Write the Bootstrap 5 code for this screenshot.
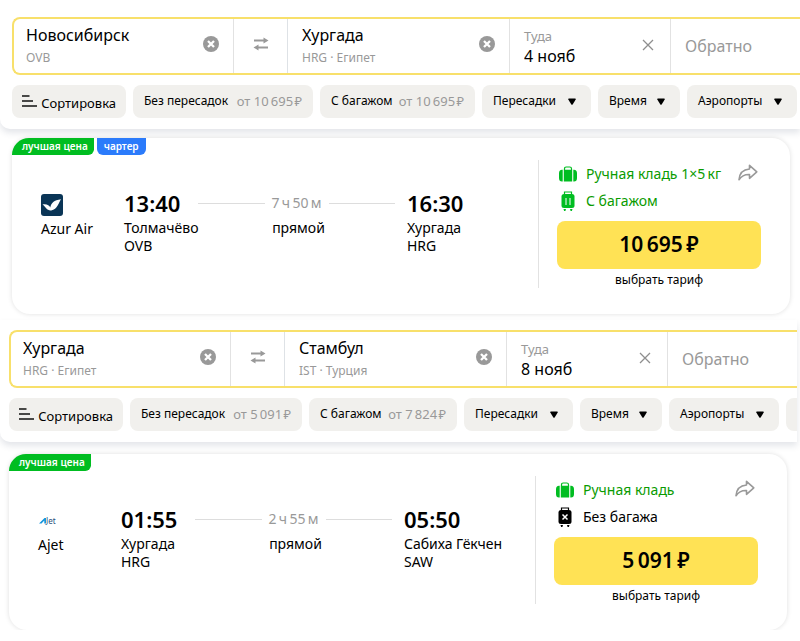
<!DOCTYPE html>
<html lang="ru">
<head>
<meta charset="utf-8">
<meta name="viewport" content="width=device-width, initial-scale=1">
<title>Авиабилеты</title>
<link rel="stylesheet" href="https://cdn.jsdelivr.net/npm/bootstrap@5.3.0/dist/css/bootstrap.min.css">
<style>
body{font-family:"Noto Sans","Open Sans",sans-serif;font-size:14px;line-height:18px;color:#000;background:#fff;overflow-x:hidden}
button{color:inherit}
.results{--edge:12px}
.results-next{--edge:9px;margin-right:3px;margin-top:6px}
.search-panel{padding:17px 0 11px var(--edge);border-bottom-left-radius:10px;box-shadow:0 4px 6px rgba(50,60,90,.13);overflow:hidden;background:#fff}
.results-next .search-panel{padding-top:10px}
.search-line{height:58px;border:2px solid #f8e06b;border-right:0;border-radius:8px 0 0 8px}
.cell{border-right:1px solid #e2e2e2;min-width:0}
.plain{border:0;background:none;padding:0;display:flex;flex:none}
.city{flex:1 1 0;padding:5px 14px 0 12px}
.swap{width:54px;padding-bottom:4px}
.city-from{flex-basis:0;padding-right:14px}
.city-to{padding-left:14px}
.when{width:161px;padding:8px 14px 0 14px}
.back{width:129px;padding-left:14px}
.field{border:0;padding:0;background:none;width:100%;color:#000;outline-offset:2px;font-size:16px;line-height:22px;height:22px;display:block}
.field::placeholder{color:#999;opacity:1}
.note{font-size:13px;line-height:18px;color:#999}
.city .note{font-size:12px;margin-top:3px}
.wipe{align-self:flex-start;margin-top:12px}
.chips{gap:7px;margin-top:10px}
.chip{height:33px;flex:none;border:0;border-radius:8px;background:#f1f0ed;font-size:12px;padding:0 11px 1px;white-space:nowrap;display:flex;align-items:center;justify-content:space-between}
.chip-sort{width:114px;padding:2px 10px 0 10px;font-size:13px}
.chip-direct{width:180px}.chip-bag{width:155px}
.results-next .chip-direct{width:172px}.results-next .chip-bag{width:148px}
.chip-stops{width:109px}.chip-time{width:82px}.chip-port{width:110px}
.chip span{color:#999;font-size:13px}
.ticket{margin:9px 10px 0 var(--edge);border-radius:18px;background:#fff;box-shadow:0 0 5px rgba(0,0,0,.13)}
.results-next .ticket{margin-top:12px}
.tag-line{gap:3px;height:17px}
.tag{font-size:10px;line-height:17px;font-weight:600;color:#fff;background:#00bd21;padding:0 6px 0 10px;border-radius:18px 0 6px 0}
.tag-blue{background:#2b7bfb;border-radius:0 0 6px 6px;padding:0 7px}
.route{padding:35px 0 0 29px}
.carrier{width:83px;flex:none}
.carrier svg{display:block;margin:4px 0}
.stop-from{width:74px;flex:none}
.stop-to{width:131px;flex:none;white-space:nowrap}
.clock{font-size:22px;line-height:26px;font-weight:600;margin-bottom:3px}
.leg{height:26px;gap:7px;color:#999;margin:0 12px 3px 0}
.leg i{height:1px;background:#ddd;flex:1}
.offer{width:252px;flex:none;border-left:1px solid #e2e2e2;margin:5px 0 26px;padding:0 29px 0 18px;height:128px}
.bag{height:27px;gap:7px}
.green{color:#0a9b00}
.share{margin-left:auto;margin-right:3px;padding-bottom:3px}
.price{width:100%;height:48px;border:0;border-radius:8px;background:#ffe255;font-size:21px;font-weight:600;margin-top:7px;padding-bottom:3px;display:block}
.hint{font-size:12px;line-height:22px;text-align:center}
</style>
<script src="https://cdn.jsdelivr.net/npm/bootstrap@5.3.0/dist/js/bootstrap.bundle.min.js"></script>
</head>
<body>
<svg class="d-none" aria-hidden="true">
<symbol id="clear" viewBox="0 0 16 16"><circle cx="8" cy="8" r="8" fill="#999"/><path d="M5 5l6 6M11 5l-6 6" stroke="#fff" stroke-width="2.300"/></symbol>
<symbol id="swap" viewBox="0 0 16 14"><path d="M1 3.500h11M4 10.500h11" stroke="#999" stroke-width="1.800" fill="none"/><path d="M10.500.500L15.500 3.500l-5 3zM5.500 7.500L.5 10.500l5 3z" fill="#999"/></symbol>
<symbol id="cross" viewBox="0 0 12 12"><path d="M1 1l10 10M11 1L1 11" stroke="#8e8e8e" stroke-width="1.300"/></symbol>
<symbol id="sort" viewBox="0 0 15 12"><path d="M0 1h7.500M0 6h11M0 11h15" stroke="#111" stroke-width="1.600"/></symbol>
<symbol id="down" viewBox="0 0 8 7"><path d="M.8.500h6.400q1 0 .5 1L4.800 6.300q-.8 1-1.600 0L.3 1.500q-.5-1 .5-1z" fill="#000"/></symbol>
<symbol id="hand" viewBox="0 0 18 16"><path d="M5.500 4V2.800Q5.500 1 7.200 1h3.600q1.700 0 1.700 1.800V4" fill="none" stroke="#00bd21" stroke-width="1.200"/><path d="M4.800 3.800h8.400V15.500H4.800zM3.700 3.800v11.700H3Q0 15.500 0 12V7.300Q0 3.800 3 3.800zM14.300 3.800v11.700h.7q3 0 3-3.500V7.300q0-3.500-3-3.500z" fill="#00bd21"/></symbol>
<symbol id="case" viewBox="0 0 14 20"><path d="M3.500 3V1h7v2" fill="none" stroke="currentColor" stroke-width="1.200"/><rect x="0.500" y="3" width="13" height="14" rx="2.500" fill="currentColor"/><path d="M2.500 18h2.500l-.6 2H3.100zM9 18h2.500l-.6 2H9.600z" fill="currentColor"/></symbol>
<symbol id="share" viewBox="0 0 20 17"><path d="M11.500 1.300L18.800 7.800l-7.300 6.500v-3.800C7 10.300 3.500 11.800 1 15.700 1.500 9.500 5 5.500 11.500 5z" fill="none" stroke="#999" stroke-width="1.600" stroke-linejoin="round"/></symbol>
</svg>

<main>
<section class="results">
  <form class="search-panel">
    <div class="search-line d-flex">
      <div class="cell city city-from d-flex">
        <div class="flex-grow-1"><input class="field" type="text" aria-label="Откуда" value="Новосибирск"><div class="note">OVB</div></div>
        <button class="plain wipe" type="button" aria-label="Очистить"><svg width="16" height="16"><use href="#clear"/></svg></button>
      </div>
      <button class="plain cell swap border-end rounded-0 align-items-center justify-content-center" type="button" aria-label="Поменять местами"><svg width="16" height="14"><use href="#swap"/></svg></button>
      <div class="cell city city-to d-flex">
        <div class="flex-grow-1"><input class="field" type="text" aria-label="Куда" value="Хургада"><div class="note">HRG · Египет</div></div>
        <button class="plain wipe" type="button" aria-label="Очистить"><svg width="16" height="16"><use href="#clear"/></svg></button>
      </div>
      <div class="cell when d-flex">
        <div class="flex-grow-1"><label class="note d-block" for="date-a">Туда</label><input class="field" id="date-a" type="text" value="4 нояб"></div>
        <button class="plain wipe" type="button" aria-label="Очистить дату"><svg width="16" height="12"><use href="#cross"/></svg></button>
      </div>
      <div class="back d-flex align-items-center"><input class="field" type="text" aria-label="Обратно" placeholder="Обратно"></div>
    </div>
    <div class="chips d-flex">
      <button class="chip chip-sort" type="button"><svg class="mb-1" width="15" height="12"><use href="#sort"/></svg>Сортировка</button>
      <button class="chip chip-direct" type="button">Без пересадок <span>от 10&#8201;695&#8202;₽</span></button>
      <button class="chip chip-bag" type="button">С багажом <span>от 10&#8201;695&#8202;₽</span></button>
      <button class="chip chip-stops" type="button">Пересадки <svg class="me-1" width="8" height="7"><use href="#down"/></svg></button>
      <button class="chip chip-time" type="button">Время <svg class="me-1" width="8" height="7"><use href="#down"/></svg></button>
      <button class="chip chip-port" type="button">Аэропорты <svg class="me-1" width="8" height="7"><use href="#down"/></svg></button>
    </div>
  </form>
  <article class="ticket">
    <div class="tag-line d-flex"><span class="tag">лучшая цена</span><span class="tag tag-blue">чартер</span></div>
    <div class="d-flex">
      <div class="route d-flex flex-grow-1">
        <div class="carrier"><svg width="22" height="22" viewBox="0 0 22 22" role="img" aria-label="Azur Air"><rect width="22" height="22" rx="3" fill="#0a3556"/><path d="M1.500 10.500C5 9.500 8.500 11 9.300 13.500 10 9.500 13 6 20 5.300 18 8 16.500 15.500 10.200 16.500 6 17 4.500 12.500 1.500 10.500z" fill="#fff"/></svg>Azur Air</div>
        <div class="stop-from"><div class="clock">13:40</div>Толмачёво<br>OVB</div>
        <div class="flex-grow-1"><div class="leg d-flex align-items-center"><i></i><span>7&#8201;ч&#8201;50&#8201;м</span><i></i></div><div class="text-center pe-2">прямой</div></div>
        <div class="stop-to"><div class="clock">16:30</div>Хургада<br>HRG</div>
      </div>
      <div class="offer">
        <div class="bag green d-flex align-items-center"><svg class="flex-shrink-0" width="22" height="16"><use href="#hand"/></svg><span>Ручная кладь 1×5&#8201;кг</span><button class="plain share" type="button" aria-label="Поделиться"><svg width="20" height="17"><use href="#share"/></svg></button></div>
        <div class="bag green d-flex align-items-center"><svg width="22" height="20" color="#00bd21"><use href="#case"/><path d="M9 7v7M13 7v7" stroke="#fff"/></svg>С багажом</div>
        <button class="price" type="button">10&#8201;695&#8201;₽</button>
        <div class="hint">выбрать тариф</div>
      </div>
    </div>
  </article>
</section>

<section class="results results-next">
  <form class="search-panel">
    <div class="search-line d-flex">
      <div class="cell city city-from d-flex">
        <div class="flex-grow-1"><input class="field" type="text" aria-label="Откуда" value="Хургада"><div class="note">HRG · Египет</div></div>
        <button class="plain wipe" type="button" aria-label="Очистить"><svg width="16" height="16"><use href="#clear"/></svg></button>
      </div>
      <button class="plain cell swap border-end rounded-0 align-items-center justify-content-center" type="button" aria-label="Поменять местами"><svg width="16" height="14"><use href="#swap"/></svg></button>
      <div class="cell city city-to d-flex">
        <div class="flex-grow-1"><input class="field" type="text" aria-label="Куда" value="Стамбул"><div class="note">IST · Турция</div></div>
        <button class="plain wipe" type="button" aria-label="Очистить"><svg width="16" height="16"><use href="#clear"/></svg></button>
      </div>
      <div class="cell when d-flex">
        <div class="flex-grow-1"><label class="note d-block" for="date-b">Туда</label><input class="field" id="date-b" type="text" value="8 нояб"></div>
        <button class="plain wipe" type="button" aria-label="Очистить дату"><svg width="16" height="12"><use href="#cross"/></svg></button>
      </div>
      <div class="back d-flex align-items-center"><input class="field" type="text" aria-label="Обратно" placeholder="Обратно"></div>
    </div>
    <div class="chips d-flex">
      <button class="chip chip-sort" type="button"><svg class="mb-1" width="15" height="12"><use href="#sort"/></svg>Сортировка</button>
      <button class="chip chip-direct" type="button">Без пересадок <span>от 5&#8201;091&#8202;₽</span></button>
      <button class="chip chip-bag" type="button">С багажом <span>от 7&#8201;824&#8202;₽</span></button>
      <button class="chip chip-stops" type="button">Пересадки <svg class="me-1" width="8" height="7"><use href="#down"/></svg></button>
      <button class="chip chip-time" type="button">Время <svg class="me-1" width="8" height="7"><use href="#down"/></svg></button>
      <button class="chip chip-port" type="button">Аэропорты <svg class="me-1" width="8" height="7"><use href="#down"/></svg></button>
      <button class="chip" type="button" aria-label="Ещё фильтры"></button>
    </div>
  </form>
  <article class="ticket">
    <div class="tag-line d-flex"><span class="tag">лучшая цена</span></div>
    <div class="d-flex">
      <div class="route d-flex flex-grow-1">
        <div class="carrier"><svg width="22" height="22" viewBox="0 0 22 22" role="img" aria-label="Ajet"><path d="M1 13.500L6.500 8H8v5.500H6.300v-3L3.500 13.500z" fill="#1595dc"/><text x="8" y="14" font-size="8" fill="#28507c">Jet</text></svg>Ajet</div>
        <div class="stop-from"><div class="clock">01:55</div>Хургада<br>HRG</div>
        <div class="flex-grow-1"><div class="leg d-flex align-items-center"><i></i><span>2&#8201;ч&#8201;55&#8201;м</span><i></i></div><div class="text-center pe-2">прямой</div></div>
        <div class="stop-to"><div class="clock">05:50</div>Сабиха Гёкчен<br>SAW</div>
      </div>
      <div class="offer">
        <div class="bag green d-flex align-items-center"><svg class="flex-shrink-0" width="22" height="16"><use href="#hand"/></svg><span>Ручная кладь</span><button class="plain share" type="button" aria-label="Поделиться"><svg width="20" height="17"><use href="#share"/></svg></button></div>
        <div class="bag d-flex align-items-center"><svg width="22" height="20"><use href="#case"/><path d="M8.500 7.500l5 5M13.500 7.500l-5 5" stroke="#fff" stroke-width="1.500"/></svg>Без багажа</div>
        <button class="price" type="button">5&#8201;091&#8201;₽</button>
        <div class="hint">выбрать тариф</div>
      </div>
    </div>
  </article>
</section>
</main>
</body>
</html>
